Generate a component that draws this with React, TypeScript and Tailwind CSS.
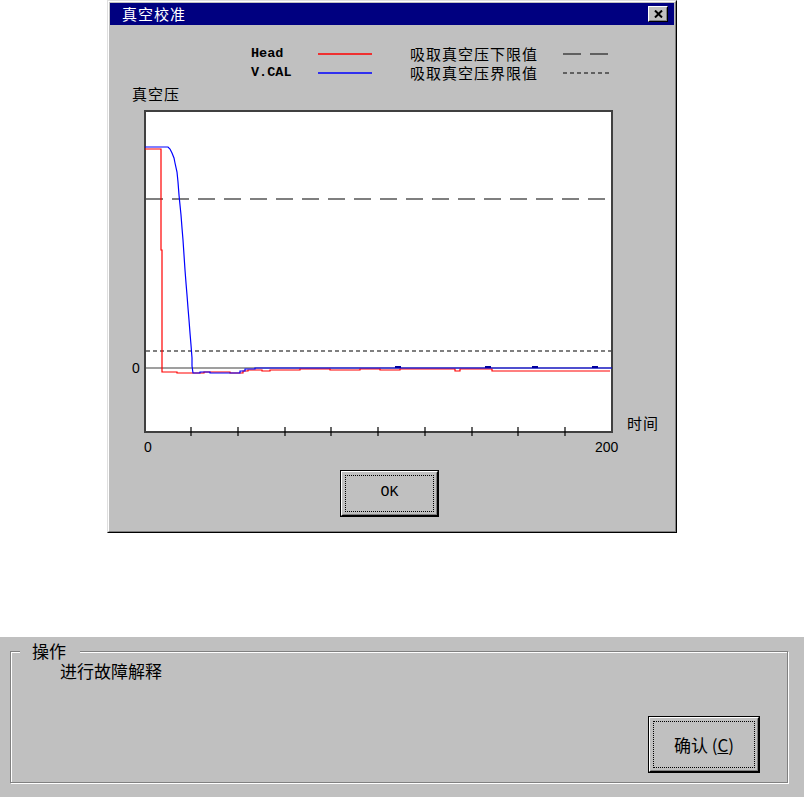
import type { ReactNode } from "react";

const CJK = "font-['Noto_Sans_CJK_SC',sans-serif]";
const MONO = "font-['Liberation_Mono',monospace]";

// page coords of the traces (svg uses a page-aligned viewBox)
const RED: [number, number][] = [
    [145, 149], [161, 149], [161, 250], [162, 250], [162, 372], [177, 372], [177, 373],
    [204, 373], [204, 372], [230, 372], [230, 373], [243, 373], [243, 371], [248, 371],
    [248, 370], [262, 370], [262, 371], [270, 371], [270, 370], [300, 370], [300, 369],
    [330, 369], [330, 370], [360, 370], [360, 369], [380, 369], [380, 370], [400, 370],
    [400, 369], [455, 369], [455, 371], [460, 371], [460, 369], [492, 369], [492, 371],
    [610, 371],
];

const BLUE: [number, number][] = [
    [145, 147], [168, 147], [170, 149], [172, 153], [174, 158], [175, 163], [177, 172],
    [178, 182], [179, 195], [180, 205], [181, 215], [182, 228], [183, 240], [184, 255],
    [185, 270], [186, 283], [187, 295], [188, 308], [189, 320], [190, 333], [191, 345],
    [192, 358], [192, 366], [193, 373], [200, 373], [200, 372], [210, 372], [210, 373],
    [240, 373], [240, 371], [245, 371], [245, 369], [255, 369], [255, 368], [612, 368],
];

const TICKS = [191, 238, 285, 331, 378, 425, 472, 518, 565];
const BLIPS = [395, 485, 532, 592];

const pts = (list: [number, number][]) => list.map(([x, y]) => `${x},${y}`).join(" ");

function WinButton({ className, children }: { className: string; children: ReactNode }) {
    return (
        <div className={`border border-black bg-[#c0c0c0] ${className}`}>
            <div className="h-full border border-t-white border-l-white border-r-black border-b-black">
                <div className="h-full border border-t-[#c0c0c0] border-l-[#c0c0c0] border-r-[#808080] border-b-[#808080] p-[2px]">
                    <div className="h-full border border-dotted border-black flex items-center justify-center text-black">
                        {children}
                    </div>
                </div>
            </div>
        </div>
    );
}

function Chart() {
    return (
        <svg width={564} height={378} viewBox="110 82 564 378" className="block">
            <text x={132} y={100} fontSize={15} letterSpacing={1} fontFamily="Noto Sans CJK SC, sans-serif" fill="#000">
                真空压
            </text>
            <rect x={145} y={111} width={467} height={321} fill="#fff" stroke="#404040" strokeWidth={2} />
            <line x1={146} x2={611} y1={199} y2={199} stroke="#000" strokeWidth={1.2} strokeDasharray="17 9" />
            <line x1={146} x2={611} y1={351} y2={351} stroke="#000" strokeWidth={1.2} strokeDasharray="4 3" />
            <line x1={146} x2={611} y1={368} y2={368} stroke="#404040" strokeWidth={1.2} />
            <polyline points={pts(RED)} fill="none" stroke="#ff0000" strokeWidth={1.2} />
            <polyline points={pts(BLUE)} fill="none" stroke="#0000ff" strokeWidth={1.2} />
            {BLIPS.map((x) => (
                <rect key={x} x={x} y={366} width={6} height={2} fill="#0000a0" />
            ))}
            {TICKS.map((x) => (
                <line key={x} x1={x} x2={x} y1={427} y2={436} stroke="#000" strokeWidth={1.2} />
            ))}
            <text x={132} y={373} fontSize={14} fontFamily="Liberation Sans, sans-serif" fill="#000">0</text>
            <text x={144} y={452} fontSize={14} fontFamily="Liberation Sans, sans-serif" fill="#000">0</text>
            <text x={595} y={452} fontSize={14} fontFamily="Liberation Sans, sans-serif" fill="#000">200</text>
            <text x={627} y={429} fontSize={15} letterSpacing={1} fontFamily="Noto Sans CJK SC, sans-serif" fill="#000">
                时间
            </text>
        </svg>
    );
}

function LegendRow({ name, color, label, dash }: { name: string; color: string; label: string; dash: string }) {
    return (
        <div className="flex items-center h-[19px] pl-[141px]">
            <span className={`w-[67px] text-[13.5px] font-bold leading-[19px] ${MONO}`}>{name}</span>
            <svg width={54} height={4} className="block">
                <line x1={0} x2={54} y1={2} y2={2} stroke={color} strokeWidth={1.5} />
            </svg>
            <span className={`ml-[38px] w-[153px] text-[15px] tracking-[1px] leading-[19px] ${CJK}`}>{label}</span>
            <svg width={49} height={4} className="block">
                <line x1={0} x2={49} y1={2} y2={2} stroke="#000" strokeWidth={1.2} strokeDasharray={dash} />
            </svg>
        </div>
    );
}

export default function App() {
    return (
        <div className="w-[804px] h-[797px] bg-white flex flex-col overflow-hidden text-black">
            {/* dialog */}
            <div className="ml-[107px] w-[570px] h-[533px] border border-t-[#dfdfdf] border-l-[#dfdfdf] border-r-black border-b-black">
                <div className="h-full border border-t-white border-l-white border-r-[#808080] border-b-[#808080] bg-[#c0c0c0] p-px flex flex-col">
                    <div className="h-[22px] bg-[#000080] flex items-center justify-between pl-[12px] pr-[6px]">
                        <span className={`text-white text-[15px] tracking-[1px] leading-[22px] ${CJK}`}>真空校准</span>
                        <div className="w-[20px] h-[16px] bg-[#c0c0c0] border border-t-white border-l-white border-r-black border-b-black">
                            <div className="h-full border border-t-[#c0c0c0] border-l-[#c0c0c0] border-r-[#808080] border-b-[#808080] flex items-center justify-center">
                                <svg width={9} height={8} viewBox="0 0 9 8">
                                    <path d="M1 0.5 L8 7.5 M8 0.5 L1 7.5" stroke="#000" strokeWidth={2} />
                                </svg>
                            </div>
                        </div>
                    </div>

                    <div className="pt-[19px] flex flex-col">
                        <LegendRow name="Head" color="#ff0000" label="吸取真空压下限值" dash="18 9" />
                        <LegendRow name="V.CAL" color="#0000ff" label="吸取真空压界限值" dash="4 3" />
                    </div>

                    <Chart />

                    <WinButton className="mt-[10px] ml-[230px] w-[99px] h-[47px]">
                        <span className={`text-[15px] ${MONO}`}>OK</span>
                    </WinButton>
                </div>
            </div>

            {/* operation panel */}
            <div className="mt-[104px] h-[160px] bg-[#c0c0c0] pt-[14px]">
                <div className="relative ml-[10px] w-[778px] h-[132px] border border-[#808080] shadow-[inset_1px_1px_0_#fff,1px_1px_0_#fff] flex flex-col">
                    <span className={`absolute -top-[12px] left-[9px] pl-[12px] pr-[14px] bg-[#c0c0c0] text-[17px] leading-[22px] ${CJK}`}>
                        操作
                    </span>
                    <p className={`pl-[49px] pt-[8px] text-[17px] leading-[22px] ${CJK}`}>进行故障解释</p>
                    <WinButton className="mt-auto mb-[9px] mr-[27px] self-end w-[112px] h-[57px]">
                        <span className={`text-[17px] ${CJK}`}>
                            确认 (<span className="underline">C</span>)
                        </span>
                    </WinButton>
                </div>
            </div>
        </div>
    );
}
